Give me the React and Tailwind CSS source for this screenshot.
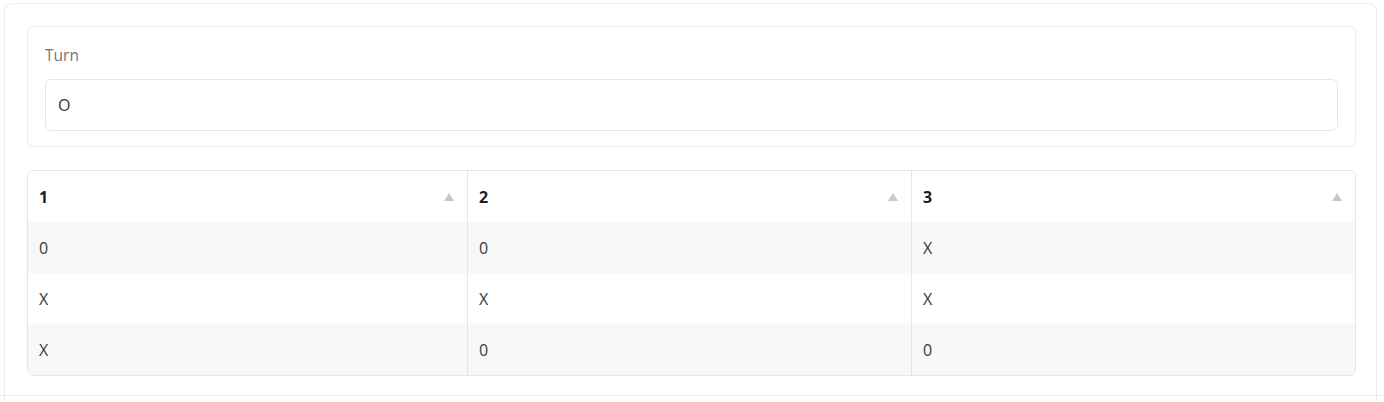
import React from "react";

const rows = [
  ["0", "0", "X"],
  ["X", "X", "X"],
  ["X", "0", "0"],
];

function SortIcon() {
  return (
    <svg width="10" height="8" viewBox="0 0 10 8" className="shrink-0">
      <path d="M5 0 L10 8 L0 8 Z" fill="#c8c8c8" />
    </svg>
  );
}

export default function App() {
  return (
    <div className="h-[402px] w-[1384px] overflow-hidden bg-white pl-[4px] pr-[7px] pt-[3px]" style={{ fontFamily: "'Open Sans', sans-serif" }}>
      <div className="flex h-[420px] flex-col rounded-t-lg border border-[#ececec] pl-[22px] pr-[20px] pt-[22px]">
        <div className="rounded-md border border-[#ececec] px-[17px] pb-[15px] pt-[18px]">
          <div className="mb-[13px] text-[15.5px] leading-[21px] text-[#757575]">Turn</div>
          <div className="flex h-[52px] items-center rounded-md border border-[#e6e6e6] px-[12px] text-[16px] text-[#333]">
            O
          </div>
        </div>

        <div className="mt-[23px] overflow-hidden rounded-md border border-[#e6e6e6]">
          <div className="grid grid-cols-[439px_444px_1fr]">
            {["1", "2", "3"].map((h, i) => (
              <div
                key={h}
                className={
                  "flex h-[51px] items-center justify-between bg-white pl-[11px] pr-[13px] text-[16px] font-bold text-[#1c1c28]" +
                  (i > 0 ? " border-l border-[#e6e6e6]" : "")
                }
              >
                <span>{h}</span>
                <SortIcon />
              </div>
            ))}
            {rows.map((r, ri) =>
              r.map((c, ci) => (
                <div
                  key={ri + "-" + ci}
                  className={
                    "flex h-[51px] items-center pl-[11px] text-[16px] text-[#3a3a3a]" +
                    (ri % 2 === 0 ? " bg-[#f8f8f8]" : " bg-white") +
                    (ci > 0 ? " border-l border-[#e6e6e6]" : "")
                  }
                >
                  {c}
                </div>
              ))
            )}
          </div>
        </div>

        <div className="ml-[-27px] mr-[-30px] mt-[19px] border-t border-[#ececec]" />
      </div>
    </div>
  );
}
